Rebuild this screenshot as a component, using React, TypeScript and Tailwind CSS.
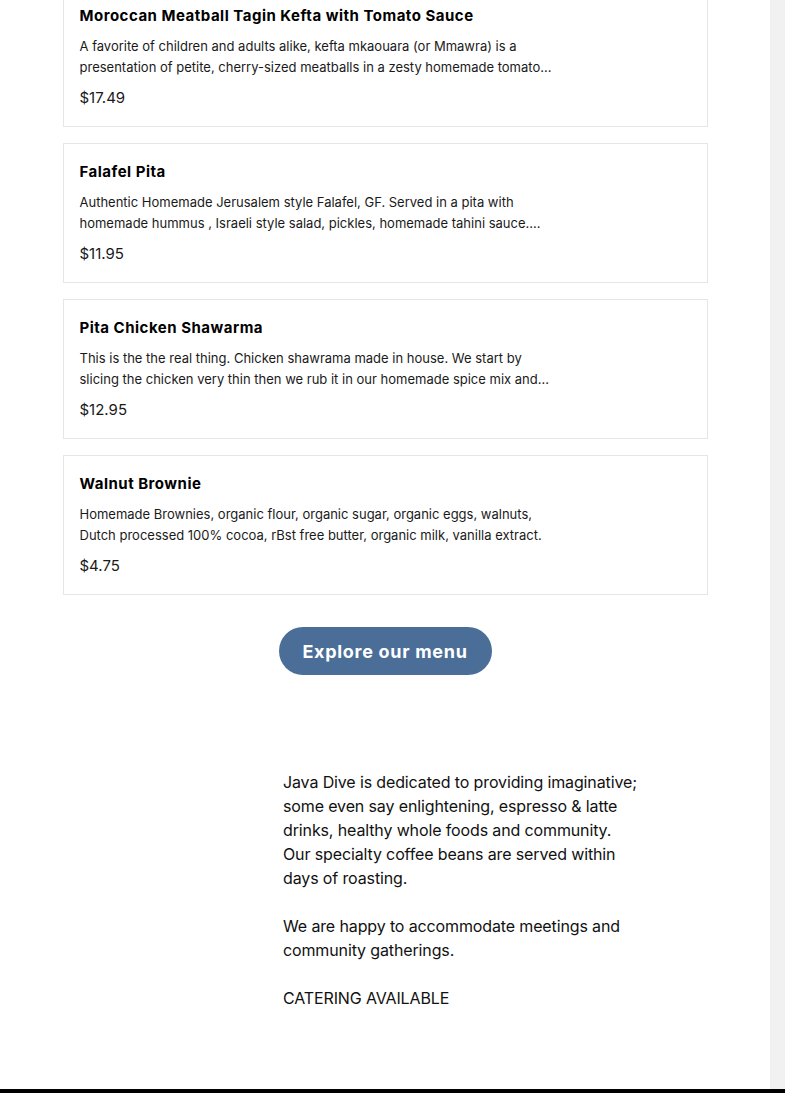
import React from 'react';

interface MenuItem {
  name: string;
  lines: [string, string];
  price: string;
}

// descriptions are cut to two lines, the way the menu widget shows them
const items: MenuItem[] = [
  {
    name: 'Moroccan Meatball Tagin Kefta with Tomato Sauce',
    lines: [
      'A favorite of children and adults alike, kefta mkaouara (or Mmawra) is a',
      'presentation of petite, cherry-sized meatballs in a zesty homemade tomato...',
    ],
    price: '$17.49',
  },
  {
    name: 'Falafel Pita',
    lines: [
      'Authentic Homemade Jerusalem style Falafel, GF. Served in a pita with',
      'homemade hummus , Israeli style salad, pickles, homemade tahini sauce....',
    ],
    price: '$11.95',
  },
  {
    name: 'Pita Chicken Shawarma',
    lines: [
      'This is the the real thing. Chicken shawrama made in house. We start by',
      'slicing the chicken very thin then we rub it in our homemade spice mix and...',
    ],
    price: '$12.95',
  },
  {
    name: 'Walnut Brownie',
    lines: [
      'Homemade Brownies, organic flour, organic sugar, organic eggs, walnuts,',
      'Dutch processed 100% cocoa, rBst free butter, organic milk, vanilla extract.',
    ],
    price: '$4.75',
  },
];

const aboutLines = [
  'Java Dive is dedicated to providing imaginative;',
  'some even say enlightening, espresso & latte',
  'drinks, healthy whole foods and community.',
  'Our specialty coffee beans are served within',
  'days of roasting.',
];

const MenuCard: React.FC<{ item: MenuItem }> = ({ item }) => (
  <div className="h-[140px] border border-[#e6e6e6] bg-white px-4 pt-[17px]">
    <h3 className="text-[15px] leading-[22px] font-bold tracking-[0.5px] text-black">{item.name}</h3>
    <div className="mt-[9px] text-[13px] leading-[21px] text-[#1a1a1a]">
      {item.lines.map((line) => (
        <p key={line} className="whitespace-nowrap">{line}</p>
      ))}
    </div>
    <p className="mt-[9px] text-[15px] leading-[22px] text-[#1a1a1a]">{item.price}</p>
  </div>
);

export default function App() {
  return (
    <div className="relative h-[1093px] w-[785px] overflow-hidden bg-white" style={{ fontFamily: 'Inter, "Noto Sans", sans-serif' }}>
      <div className="flex h-[1089px]">
        <main className="w-[770px]">
          <div className="mx-auto -mt-[13px] flex w-[645px] flex-col gap-4">
            {items.map((item) => (
              <MenuCard key={item.name} item={item} />
            ))}
          </div>

          <div className="mt-[32px] flex justify-center">
            <button className="h-[48px] w-[213px] rounded-full bg-[#4a6e97] text-[18px] font-bold tracking-[0.7px] text-white">
              Explore our menu
            </button>
          </div>

          <div className="mt-[95px] ml-[283px] text-[16px] leading-[24px] tracking-[-0.13px] text-[#111]">
            <p>
              {aboutLines.map((line) => (
                <span key={line} className="block whitespace-nowrap">{line}</span>
              ))}
            </p>
            <p className="mt-[24px]">
              <span className="block">We are happy to accommodate meetings and</span>
              <span className="block">community gatherings.</span>
            </p>
            <p className="mt-[24px]">CATERING AVAILABLE</p>
          </div>
        </main>
        <div className="w-[15px] bg-[#f1f1f1]" />
      </div>
      <div className="h-[4px] bg-black" />
    </div>
  );
}
